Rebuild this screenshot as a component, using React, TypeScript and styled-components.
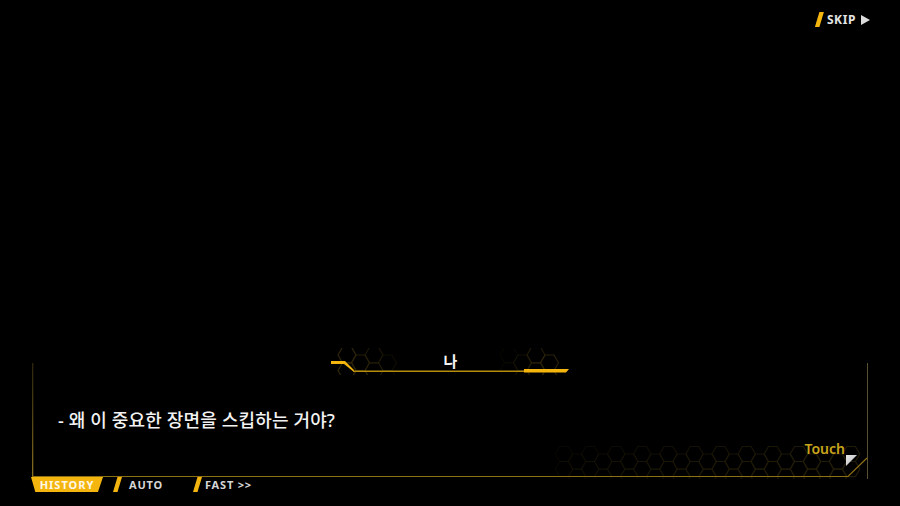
import React from "react";
import styled, { createGlobalStyle } from "styled-components";

const GOLD = "#f5b50f";
const FONT = `"Noto Sans", "Noto Sans CJK KR", sans-serif`;

const GlobalStyle = createGlobalStyle`
  html, body {
    margin: 0;
    padding: 0;
    background: #000;
  }
  * {
    box-sizing: border-box;
  }
`;

/* flat-top hexagon outline */
function hexPoints(cx: number, cy: number, r: number) {
  const h = (r * Math.sqrt(3)) / 2;
  return [
    [cx + r, cy],
    [cx + r / 2, cy + h],
    [cx - r / 2, cy + h],
    [cx - r, cy],
    [cx - r / 2, cy - h],
    [cx + r / 2, cy - h],
  ]
    .map((p) => p.map((v) => v.toFixed(1)).join(","))
    .join(" ");
}

type Hex = { cx: number; cy: number; o: number };

function honeycomb(
  x0: number,
  x1: number,
  y0: number,
  rows: number,
  r: number,
  fade: (cx: number) => number
): Hex[] {
  const h = (r * Math.sqrt(3)) / 2;
  const out: Hex[] = [];
  for (let i = 0; x0 + i * 1.5 * r <= x1; i++) {
    const cx = x0 + i * 1.5 * r;
    for (let j = 0; j < rows; j++) {
      const cy = y0 + j * 2 * h + (i % 2 ? h : 0);
      out.push({ cx, cy, o: fade(cx) });
    }
  }
  return out;
}

const bottomHexes = honeycomb(532, 826, 91, 2, 8.7, (cx) =>
  Math.min(1, 0.25 + ((cx - 532) / 294) * 0.75)
);

const plateHexes = [
  ...honeycomb(16, 66, 7, 2, 9, (cx) => Math.max(0.15, 1 - (cx - 16) / 60)),
  ...honeycomb(178, 224, 7, 2, 9, (cx) => Math.max(0.15, (cx - 170) / 54)),
];

export default function App() {
  return (
    <>
      <GlobalStyle />
      <Screen>
        <TopBar>
          <SkipButton>
            <Slash />
            <SkipLabel>SKIP</SkipLabel>
            <PlayArrow />
          </SkipButton>
        </TopBar>

        <Stage />

        <DialogFrame>
          <FrameLines width="837" height="116" viewBox="0 0 837 116">
            <defs>
              <linearGradient id="sideFade" x1="0" y1="0" x2="0" y2="1">
                <stop offset="0" stopColor="#4a3f18" stopOpacity="0.6" />
                <stop offset="1" stopColor="#8a7020" />
              </linearGradient>
            </defs>
            {bottomHexes.map((h, i) => (
              <polygon
                key={i}
                points={hexPoints(h.cx, h.cy, 8.7)}
                fill="none"
                stroke="#221c08"
                strokeWidth="1.2"
                opacity={h.o}
              />
            ))}
            <rect x="0" y="0" width="1.3" height="114" fill="url(#sideFade)" />
            <line x1="835.5" y1="0" x2="835.5" y2="116" stroke="#5a5032" strokeWidth="1" />
            <polyline
              points="0,113.5 816,113.5 835,95"
              fill="none"
              stroke="#8c7014"
              strokeWidth="1.2"
            />
          </FrameLines>

          <Nameplate>
            <PlateArt width="240" height="27" viewBox="0 0 240 27">
              {plateHexes.map((h, i) => (
                <polygon
                  key={i}
                  points={hexPoints(h.cx, h.cy, 9)}
                  fill="none"
                  stroke="#2e250a"
                  strokeWidth="1.2"
                  opacity={h.o}
                />
              ))}
              <polygon points="0,13 14,13 23,22 23,24 13,16 0,16" fill={GOLD} />
              <line x1="22" y1="23.2" x2="196" y2="23.2" stroke="#b58c0c" strokeWidth="1.5" />
              <polygon points="193,21 238,21 235,24.5 193,24.5" fill={GOLD} />
            </PlateArt>
            <SpeakerName>나</SpeakerName>
          </Nameplate>

          <DialogueLine>- 왜 이 중요한 장면을 스킵하는 거야?</DialogueLine>

          <TouchRow>
            <TouchLabel>Touch</TouchLabel>
            <TouchCorner />
          </TouchRow>
        </DialogFrame>

        <ControlBar>
          <HistoryTab>HISTORY</HistoryTab>
          <ControlButton $width={70} $gap={7}>
            <Slash />
            <ControlLabel>AUTO</ControlLabel>
          </ControlButton>
          <ControlButton $width={80} $gap={3}>
            <Slash />
            <ControlLabel>FAST &gt;&gt;</ControlLabel>
          </ControlButton>
        </ControlBar>
      </Screen>
    </>
  );
}

/* ── Screen ── */
const Screen = styled.div`
  width: 900px;
  height: 506px;
  display: flex;
  flex-direction: column;
  background: #000;
  font-family: ${FONT};
  overflow: hidden;
`;

const Stage = styled.div`
  flex: 1;
`;

/* ── Skip ── */
const TopBar = styled.div`
  display: flex;
  justify-content: flex-end;
  padding: 12px 30px 0 0;
`;

const SkipButton = styled.div`
  display: flex;
  align-items: center;
  height: 15px;
`;

const Slash = styled.span`
  display: block;
  width: 9px;
  height: 15px;
  background: ${GOLD};
  clip-path: polygon(50% 0, 100% 0, 50% 100%, 0 100%);
  flex-shrink: 0;
`;

const SkipLabel = styled.span`
  margin-left: 3px;
  font-size: 12px;
  font-weight: 700;
  letter-spacing: 0.6px;
  color: #e4e4e4;
  line-height: 15px;
`;

const PlayArrow = styled.span`
  margin-left: 5px;
  width: 0;
  height: 0;
  border-top: 5px solid transparent;
  border-bottom: 5px solid transparent;
  border-left: 9px solid #dcdcdc;
`;

/* ── Dialog ── */
const DialogFrame = styled.div`
  position: relative;
  height: 114px;
  margin: 0 32px;
  display: flex;
  flex-direction: column;
`;

const FrameLines = styled.svg`
  position: absolute;
  left: 0;
  top: 0;
  pointer-events: none;
`;

const Nameplate = styled.div`
  position: relative;
  align-self: center;
  width: 240px;
  height: 27px;
  margin-top: -15px;
  margin-left: 1px;
  display: flex;
  align-items: center;
  justify-content: center;
`;

const PlateArt = styled.svg`
  position: absolute;
  left: 0;
  top: 0;
`;

const SpeakerName = styled.span`
  position: relative;
  font-size: 15px;
  font-weight: 700;
  line-height: 27px;
  color: #f4f4f4;
`;

const DialogueLine = styled.p`
  position: relative;
  margin: 33px 0 0;
  padding-left: 26px;
  font-size: 18px;
  font-weight: 500;
  letter-spacing: 0.15px;
  line-height: 25px;
  color: #f2f2f2;
`;

const TouchRow = styled.div`
  position: relative;
  margin-top: auto;
  align-self: flex-end;
  display: flex;
  align-items: flex-end;
  gap: 1px;
  padding: 0 11px 11px 0;
`;

const TouchLabel = styled.span`
  margin-bottom: 9px;
  font-size: 14px;
  font-weight: 600;
  line-height: 16px;
  color: #c9a51c;
`;

const TouchCorner = styled.span`
  width: 11px;
  height: 11px;
  background: linear-gradient(135deg, #e8e8e8, #b8b8b8);
  clip-path: polygon(0 0, 100% 0, 0 100%);
`;

/* ── Bottom controls ── */
const ControlBar = styled.div`
  height: 29px;
  display: flex;
  align-items: flex-start;
  padding-left: 31px;
  gap: 10px;
`;

const HistoryTab = styled.div`
  width: 72px;
  height: 15px;
  display: flex;
  align-items: center;
  justify-content: center;
  background: ${GOLD};
  clip-path: polygon(0 0, 100% 0, 93% 100%, 6% 100%);
  font-size: 11px;
  font-weight: 700;
  letter-spacing: 1px;
  color: #fff8e6;
  line-height: 15px;
`;

const ControlButton = styled.div<{ $width: number; $gap: number }>`
  width: ${({ $width }) => $width}px;
  height: 15px;
  display: flex;
  align-items: center;
  gap: ${({ $gap }) => $gap}px;
`;

const ControlLabel = styled.span`
  font-size: 11px;
  font-weight: 700;
  letter-spacing: 0.8px;
  line-height: 15px;
  color: #d6d6d6;
`;
